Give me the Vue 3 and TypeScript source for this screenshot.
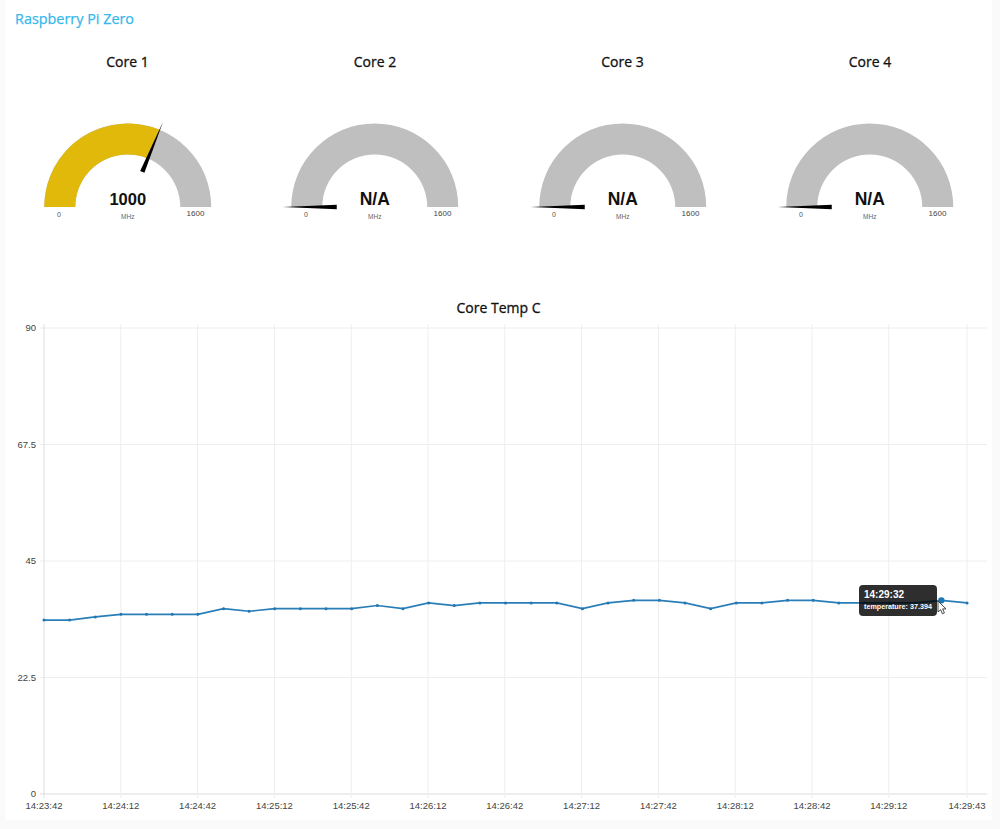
<script setup lang="ts">
interface Gauge {
  title: string
  value: number | null
}

const gauges: Gauge[] = [
  { title: 'Core 1', value: 1000 },
  { title: 'Core 2', value: null },
  { title: 'Core 3', value: null },
  { title: 'Core 4', value: null },
]

const maxValue = 1600
const cx = 123.75
const cy = 135
const outerR = 83.5
const innerR = 52.5

// Arc band from the left end up to the given fraction of the half circle
function band(fraction: number) {
  const a = Math.PI * (1 - fraction)
  const ox = cx + outerR * Math.cos(a)
  const oy = cy - outerR * Math.sin(a)
  const ix = cx + innerR * Math.cos(a)
  const iy = cy - innerR * Math.sin(a)
  return `M${cx - outerR} ${cy} A${outerR} ${outerR} 0 0 1 ${ox} ${oy} L${ix} ${iy} A${innerR} ${innerR} 0 0 0 ${cx - innerR} ${cy} Z`
}

function needle(value: number | null) {
  const a = Math.PI * (1 - (value ?? 0) / maxValue)
  const ux = Math.cos(a)
  const uy = -Math.sin(a)
  const bx = cx + 38 * ux
  const by = cy + 38 * uy
  const tx = cx + 92 * ux
  const ty = cy + 92 * uy
  return `${bx - uy * 2.3},${by + ux * 2.3} ${bx + uy * 2.3},${by - ux * 2.3} ${tx},${ty}`
}

// Chart
const plotLeft = 39
const plotRight = 982
const plotTop = 10
const plotBottom = 476
const stepX = 76.8

const yTicks = [
  { label: '90', value: 90 },
  { label: '67.5', value: 67.5 },
  { label: '45', value: 45 },
  { label: '22.5', value: 22.5 },
  { label: '0', value: 0 },
]

const xLabels = [
  '14:23:42', '14:24:12', '14:24:42', '14:25:12', '14:25:42', '14:26:12', '14:26:42',
  '14:27:12', '14:27:42', '14:28:12', '14:28:42', '14:29:12',
]

const temps = [
  33.6, 33.6, 34.2, 34.7, 34.7, 34.7, 34.7, 35.8, 35.3, 35.8, 35.8, 35.8, 35.8, 36.4, 35.8, 36.9,
  36.4, 36.9, 36.9, 36.9, 36.9, 35.8, 36.9, 37.4, 37.4, 36.9, 35.8, 36.9, 36.9, 37.4, 37.4, 36.9,
  36.9, 36.9, 36.9, 37.4, 36.9,
]

const yFor = (v: number) => plotBottom - (v / 90) * (plotBottom - plotTop)
const points = temps.map((t, i) => ({ x: plotLeft + i * 25.64, y: yFor(t) }))
const linePoints = points.map((p) => `${p.x},${p.y}`).join(' ')

const xTicks = [
  ...xLabels.map((label, i) => ({ label, x: plotLeft + i * stepX })),
  { label: '14:29:43', x: 962 },
]
const hovered = points[35]
</script>

<template>
  <div class="card">
    <h2 class="group-title">Raspberry Pi Zero</h2>

    <div class="gauges">
      <div v-for="gauge in gauges" :key="gauge.title" class="gauge">
        <div class="widget-title">{{ gauge.title }}</div>
        <svg width="247.5" height="170" viewBox="0 0 247.5 170">
          <path :d="band(1)" fill="#bfbfbf" />
          <path v-if="gauge.value !== null" :d="band(gauge.value / maxValue)" fill="#e0b90a" />
          <polygon :points="needle(gauge.value)" fill="#000" />
          <text :x="cx" :y="cy - 2" class="gauge-value" :class="{ empty: gauge.value === null }" text-anchor="middle">
            {{ gauge.value ?? 'N/A' }}
          </text>
          <text :x="cx" :y="cy + 12" class="gauge-unit" text-anchor="middle">MHz</text>
          <text x="55" :y="cy + 10" class="gauge-min" text-anchor="middle">0</text>
          <text x="191.5" :y="cy + 9" class="gauge-max" text-anchor="middle">1600</text>
        </svg>
      </div>
    </div>

    <div class="widget-title chart-title">Core Temp C</div>
    <div class="chart">
      <svg width="987" height="502" viewBox="0 0 987 502">
        <g v-for="tick in yTicks" :key="tick.label">
          <line :x1="plotLeft - 4" :x2="plotRight" :y1="yFor(tick.value)" :y2="yFor(tick.value)"
            :class="tick.value === 0 ? 'axis' : 'grid'" />
          <text :x="plotLeft - 8" :y="yFor(tick.value) + 3" class="tick" text-anchor="end">{{ tick.label }}</text>
        </g>
        <g v-for="(tick, i) in xTicks" :key="tick.label">
          <line :x1="tick.x" :x2="tick.x" :y1="plotTop - 4" :y2="plotBottom + 4" :class="i === 0 ? 'axis' : 'grid'" />
          <text :x="tick.x" :y="plotBottom + 15" class="tick" text-anchor="middle">{{ tick.label }}</text>
        </g>
        <polyline :points="linePoints" class="line" />
        <circle v-for="(p, i) in points" :key="i" :cx="p.x" :cy="p.y" r="1.5" fill="#1f77b4" />
        <circle :cx="hovered.x" :cy="hovered.y" r="3.2" fill="#1f77b4" />
      </svg>

      <div class="tooltip">
        <div class="tooltip-time">14:29:32</div>
        <div class="tooltip-row">temperature: 37.394</div>
      </div>

      <svg class="cursor" width="11" height="15" viewBox="0 0 11 15">
        <path d="M1 1V12L3.6 9.6L5.4 13.8L7.4 12.9L5.6 8.9H9Z" fill="#fff" stroke="#333" stroke-width="0.9" />
      </svg>
    </div>
  </div>
</template>

<style scoped>
.card {
  box-sizing: border-box;
  width: 987px;
  height: 820px;
  margin-left: 5px;
  background: #fff;
  overflow: hidden;
}

.group-title {
  margin: 0;
  padding-left: 10px;
  height: 38px;
  line-height: 38px;
  font-family: "Open Sans", sans-serif;
  font-size: 14.4px;
  font-weight: 400;
  color: #35b8ec;
  -webkit-text-stroke: 0.25px #35b8ec;
}

.gauges {
  display: grid;
  grid-template-columns: repeat(4, 247.5px);
  margin-left: -1.25px;
  margin-top: 14px;
}

.gauge svg {
  display: block;
}

.widget-title {
  height: 20px;
  line-height: 20px;
  text-align: center;
  font-family: "Open Sans", sans-serif;
  font-size: 14px;
  font-weight: 400;
  color: #111;
  -webkit-text-stroke: 0.3px #111;
}

.chart-title {
  margin-top: 56px;
}

.gauge-value {
  font-family: "Liberation Sans", sans-serif;
  font-size: 16.5px;
  font-weight: 700;
  fill: #111;
}

.gauge-value.empty {
  font-size: 17.5px;
}

.gauge-unit {
  font-family: "Liberation Sans", sans-serif;
  font-size: 6.5px;
  fill: #666;
}

.gauge-min {
  font-family: "Liberation Sans", sans-serif;
  font-size: 7px;
  fill: #555;
}

.gauge-max {
  font-family: "Liberation Sans", sans-serif;
  font-size: 8px;
  fill: #444;
}

.chart {
  position: relative;
  height: 502px;
}

.chart > svg:first-child {
  display: block;
}

.grid {
  stroke: #eeeeee;
  stroke-width: 1;
}

.axis {
  stroke: #dedede;
  stroke-width: 1;
}

.tick {
  font-family: "Liberation Sans", sans-serif;
  font-size: 9.5px;
  fill: #444;
}

.line {
  fill: none;
  stroke: #1f77b4;
  stroke-width: 1.7;
  stroke-opacity: 0.95;
}

.tooltip {
  position: absolute;
  left: 854px;
  top: 267px;
  box-sizing: border-box;
  width: 78px;
  height: 31px;
  padding: 3px 5px;
  border-radius: 4px;
  background: rgba(0, 0, 0, 0.82);
  color: #fff;
  font-family: "Liberation Sans", sans-serif;
  font-weight: 700;
}

.tooltip-time {
  font-size: 10px;
  line-height: 13px;
}

.tooltip-row {
  font-size: 7.2px;
  line-height: 11px;
  white-space: nowrap;
}

.cursor {
  position: absolute;
  left: 932px;
  top: 282px;
}
</style>

<style>
html,
body {
  background: #fafafa;
}
</style>
